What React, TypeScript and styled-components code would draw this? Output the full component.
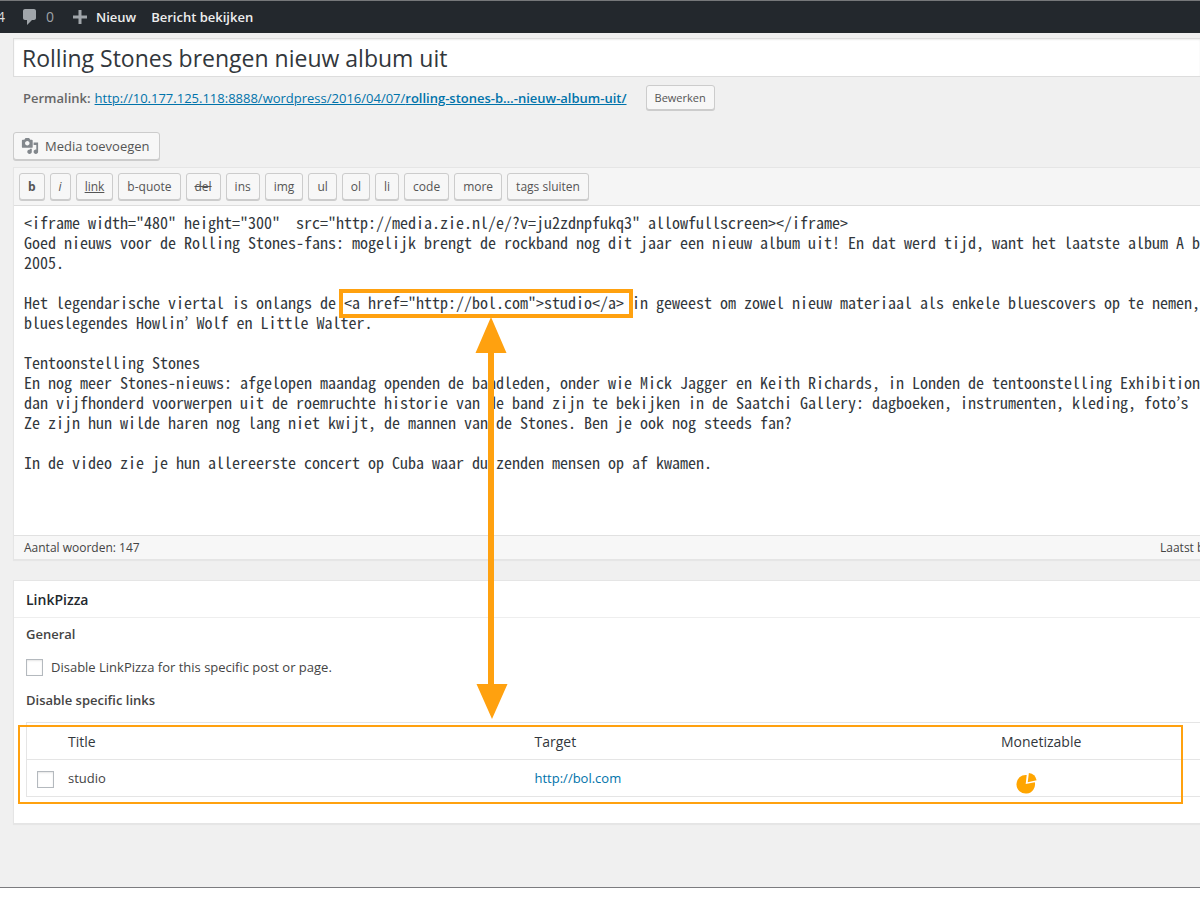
import React from "react";
import styled, { createGlobalStyle } from "styled-components";

const ORANGE = "#ffa10f";

const GlobalStyle = createGlobalStyle`
  *, *::before, *::after { box-sizing: border-box; }
  body {
    margin: 0;
    background: #fff;
    color: #444;
    font-family: "Open Sans", sans-serif;
    font-size: 13px;
    line-height: 20px;
  }
  button, input, textarea { font-family: inherit; margin: 0; }
  h2, h4, p { margin: 0; }
`;

const Page = styled.div`
  overflow: hidden;
  background: #f0f0f0;
  border-top: 1px solid #76787a;
  border-bottom: 1px solid #7c7c7f;
  padding-bottom: 63px;
`;

const AdminBar = styled.nav`
  display: flex;
  align-items: center;
  height: 32px;
  background: #23282d;
`;

const BarLink = styled.a<{ $gap: number; $muted?: boolean }>`
  display: flex;
  align-items: center;
  margin-right: ${(p) => p.$gap}px;
  color: ${(p) => (p.$muted ? "#9ea3a8" : "#eee")};
  font-weight: ${(p) => (p.$muted ? 400 : 600)};
  font-size: ${(p) => (p.$muted ? 14 : 13)}px;
  text-decoration: none;
  white-space: nowrap;
`;

const BarIcon = styled.svg<{ $gap: number }>`
  flex: none;
  margin-right: ${(p) => p.$gap}px;
  fill: #a0a5aa;
`;

const UpdateCount = styled(BarLink)`
  width: 5px;
  justify-content: flex-end;
  color: #ddd;
`;

const Main = styled.main`
  position: relative;
  padding: 5px 0 0 13px;
`;

const TitleInput = styled.input`
  display: block;
  width: 100%;
  height: 39px;
  padding: 0 8px;
  border: 1px solid #ddd;
  border-right: 0;
  background: #fff;
  box-shadow: inset 0 1px 2px rgba(0, 0, 0, 0.07);
  color: #32373c;
  font-size: 23px;
  outline: none;
`;

const Permalink = styled.div`
  display: flex;
  align-items: center;
  height: 41px;
  padding-left: 10px;
  color: #666;
  white-space: nowrap;
  strong { font-weight: 600; }
`;

const TextLink = styled.a<{ $plain?: boolean }>`
  color: #0073aa;
  text-decoration: ${(p) => (p.$plain ? "none" : "underline")};
`;

const PermalinkUrl = styled(TextLink)`
  flex: 0 0 547px;
  margin: 0 4px;
  b { font-weight: 600; }
`;

const Button = styled.button`
  height: 27px;
  padding: 0 8px;
  border: 1px solid #ccc;
  border-radius: 3px;
  background: #f7f7f7;
  box-shadow: 0 1px 0 #ccc;
  color: #555;
  font-size: 12px;
  line-height: 23px;
  white-space: nowrap;
`;

const SmallButton = styled(Button)`
  height: 25px;
  font-size: 11px;
`;

const MediaButton = styled(Button)`
  display: flex;
  align-items: center;
  gap: 6px;
  height: 28px;
  margin: 14px 0 7px;
  padding: 0 9px 0 7px;
  font-size: 13px;
  svg { fill: #82878c; }
`;

const Editor = styled.section`
  border: 1px solid #e5e5e5;
  border-right: 0;
  box-shadow: 0 1px 1px rgba(0, 0, 0, 0.04);
`;

const Toolbar = styled.div`
  display: flex;
  gap: 5px;
  height: 38px;
  padding: 5px;
  border-bottom: 1px solid #ddd;
  background: #f5f5f5;
`;

const TagButton = styled(Button)<{ $look?: "bold" | "italic" | "underline" | "strike" }>`
  font-weight: ${(p) => (p.$look === "bold" ? 700 : 400)};
  font-style: ${(p) => (p.$look === "italic" ? "italic" : "normal")};
  text-decoration: ${(p) =>
    p.$look === "underline" ? "underline" : p.$look === "strike" ? "line-through" : "none"};
`;

const Content = styled.textarea`
  display: block;
  width: 100%;
  height: 329px;
  padding: 6px 0 0 10px;
  border: 0;
  outline: none;
  resize: none;
  overflow: hidden;
  white-space: pre;
  background: #fff;
  color: #32373c;
  font-family: "Noto Sans Mono CJK KR", "DejaVu Sans Mono", monospace;
  font-size: 16px;
  line-height: 20px;
`;

const StatusBar = styled.footer`
  display: flex;
  justify-content: space-between;
  height: 24px;
  padding-left: 10px;
  border-top: 1px solid #e1e1e1;
  background: #f7f7f7;
  font-size: 12px;
  line-height: 23px;
  white-space: nowrap;
`;

const LastEdited = styled.span`
  width: 40px;
`;

const MetaBox = styled.section`
  margin-top: 20px;
  padding-bottom: 26px;
  border: 1px solid #e5e5e5;
  border-right: 0;
  background: #fff;
  box-shadow: 0 1px 1px rgba(0, 0, 0, 0.04);
`;

const BoxTitle = styled.h2`
  height: 37px;
  padding-left: 12px;
  border-bottom: 1px solid #eee;
  color: #23282d;
  font-size: 14px;
  font-weight: 600;
  line-height: 38px;
`;

const BoxBody = styled.div`
  padding: 6px 0 0 12px;
`;

const GroupTitle = styled.h4`
  font-size: 13px;
  font-weight: 600;
  line-height: 20px;
`;

const OptionLabel = styled.label`
  display: flex;
  align-items: center;
  gap: 8px;
  margin: 13px 0;
`;

const CheckBox = styled.input.attrs({ type: "checkbox" })`
  appearance: none;
  flex: none;
  display: block;
  width: 17px;
  height: 17px;
  border: 1px solid #b4b9be;
  background: #fff;
  box-shadow: inset 0 1px 2px rgba(0, 0, 0, 0.1);
`;

const LinksArea = styled.div`
  position: relative;
  margin-top: 12px;
`;

const LinksTable = styled.table`
  width: 100%;
  table-layout: fixed;
  border-collapse: separate;
  border-spacing: 0;
  border: 1px solid #e5e5e5;
  border-right: 0;

  th, td {
    height: 37px;
    padding: 0 0 0 9px;
    text-align: left;
    font-weight: 400;
  }
  th {
    padding-top: 2px;
    border-bottom: 1px solid #e5e5e5;
    color: #32373c;
    font-size: 14px;
  }
  td { height: 36px; }
`;

const CheckColumn = styled.col`
  width: 32px;
`;

const LastColumn = styled.col`
  width: 208px;
`;

const PieIcon = styled.svg`
  display: block;
  margin: 10px 0 0 15px;
  fill: #ffa500;
`;

const RowCheck = styled(CheckBox)`
  margin: 3px 0 0 1px;
`;

const TableFrame = styled.div`
  position: absolute;
  inset: 3px 17px -7px -8px;
  border: 2px solid ${ORANGE};
  pointer-events: none;
`;

const LinkFrame = styled.div`
  position: absolute;
  left: 339px;
  top: 256px;
  width: 294px;
  height: 29px;
  border: 4px solid ${ORANGE};
  pointer-events: none;
`;

const Arrow = styled.svg`
  position: absolute;
  left: 475px;
  top: 284px;
  fill: ${ORANGE};
  pointer-events: none;
`;

const tagButtons: { label: string; look?: "bold" | "italic" | "underline" | "strike" }[] = [
  { label: "b", look: "bold" },
  { label: "i", look: "italic" },
  { label: "link", look: "underline" },
  { label: "b-quote" },
  { label: "del", look: "strike" },
  { label: "ins" },
  { label: "img" },
  { label: "ul" },
  { label: "ol" },
  { label: "li" },
  { label: "code" },
  { label: "more" },
  { label: "tags sluiten" },
];

const postContent = [
  '<iframe width="480" height="300"  src="http://media.zie.nl/e/?v=ju2zdnpfukq3" allowfullscreen></iframe>',
  "Goed nieuws voor de Rolling Stones-fans: mogelijk brengt de rockband nog dit jaar een nieuw album uit! En dat werd tijd, want het laatste album A b",
  "2005.",
  "",
  'Het legendarische viertal is onlangs de <a href="http://bol.com">studio</a> in geweest om zowel nieuw materiaal als enkele bluescovers op te nemen,',
  "blueslegendes Howlin’ Wolf en Little Walter.",
  "",
  "Tentoonstelling Stones",
  "En nog meer Stones-nieuws: afgelopen maandag openden de bandleden, onder wie Mick Jagger en Keith Richards, in Londen de tentoonstelling Exhibition",
  "dan vijfhonderd voorwerpen uit de roemruchte historie van de band zijn te bekijken in de Saatchi Gallery: dagboeken, instrumenten, kleding, foto’s",
  "Ze zijn hun wilde haren nog lang niet kwijt, de mannen van de Stones. Ben je ook nog steeds fan?",
  "",
  "In de video zie je hun allereerste concert op Cuba waar duizenden mensen op af kwamen.",
].join("\n");

export default function App() {
  return (
    <>
      <GlobalStyle />
      <Page>
        <AdminBar>
          <UpdateCount href="#" $gap={15} $muted>4</UpdateCount>
          <BarLink href="#" $gap={16} $muted>
            <BarIcon width="20" height="20" viewBox="0 0 20 20" $gap={6}>
              <path d="M5 2h9c1.1 0 2 .9 2 2v7c0 1.1-.9 2-2 2h-2l-5 5v-5H5c-1.1 0-2-.9-2-2V4c0-1.1.9-2 2-2z" />
            </BarIcon>
            0
          </BarLink>
          <BarLink href="#" $gap={15}>
            <BarIcon width="20" height="20" viewBox="0 0 20 20" $gap={6}>
              <path d="M8.5 3h3v5.5H17v3h-5.500V17h-3v-5.500H3v-3h5.500z" />
            </BarIcon>
            Nieuw
          </BarLink>
          <BarLink href="#" $gap={0}>Bericht bekijken</BarLink>
        </AdminBar>

        <Main>
          <TitleInput aria-label="Titel" defaultValue="Rolling Stones brengen nieuw album uit" />
          <Permalink>
            <strong>Permalink:</strong>
            <PermalinkUrl href="#">
              http://10.177.125.118:8888/wordpress/2016/04/07/<b>rolling-stones-b…-nieuw-album-uit/</b>
            </PermalinkUrl>
            <SmallButton type="button">Bewerken</SmallButton>
          </Permalink>

          <MediaButton type="button">
            <svg width="18" height="18" viewBox="0 0 20 20">
              <path d="M13 11V4c0-.55-.45-1-1-1h-1.670L9 1H5L3.670 3H2c-.55 0-1 .45-1 1v7c0 .55.45 1 1 1h10c.55 0 1-.45 1-1zM7 4.500c1.380 0 2.500 1.120 2.500 2.500S8.380 9.500 7 9.500 4.500 8.380 4.500 7 5.620 4.500 7 4.500zM14 6h5v10.500c0 1.380-1.120 2.500-2.500 2.500S14 17.880 14 16.500s1.120-2.500 2.500-2.500c.17 0 .34.02.5.05V9h-3V6zm-4 8.050V13h2v3.500c0 1.380-1.120 2.500-2.500 2.500S7 17.880 7 16.500 8.120 14 9.500 14c.17 0 .34.02.5.05z" />
            </svg>
            Media toevoegen
          </MediaButton>

          <Editor>
            <Toolbar>
              {tagButtons.map((b) => (
                <TagButton key={b.label} type="button" $look={b.look}>{b.label}</TagButton>
              ))}
            </Toolbar>
            <Content aria-label="Bericht" wrap="off" spellCheck={false} defaultValue={postContent} />
            <StatusBar>
              <span>Aantal woorden: 147</span>
              <LastEdited>Laatst b</LastEdited>
            </StatusBar>
          </Editor>

          <MetaBox>
            <BoxTitle>LinkPizza</BoxTitle>
            <BoxBody>
              <GroupTitle>General</GroupTitle>
              <OptionLabel>
                <CheckBox />
                Disable LinkPizza for this specific post or page.
              </OptionLabel>
              <GroupTitle>Disable specific links</GroupTitle>
              <LinksArea>
                <LinksTable>
                  <colgroup>
                    <CheckColumn />
                    <col />
                    <col />
                    <LastColumn />
                  </colgroup>
                  <thead>
                    <tr>
                      <th />
                      <th>Title</th>
                      <th>Target</th>
                      <th>Monetizable</th>
                    </tr>
                  </thead>
                  <tbody>
                    <tr>
                      <td><RowCheck aria-label="studio" /></td>
                      <td>studio</td>
                      <td><TextLink href="#" $plain>http://bol.com</TextLink></td>
                      <td>
                        <PieIcon width="21" height="21" viewBox="0 0 21 21">
                          <path d="M10.700 2A9.300 9.300 0 1 0 18.800 9.200L9.700 11z" />
                          <path d="M12.900 0A9 9 0 0 1 20.600 7.200L11.700 9.200z" />
                        </PieIcon>
                      </td>
                    </tr>
                  </tbody>
                </LinksTable>
                <TableFrame />
              </LinksArea>
            </BoxBody>
          </MetaBox>

          <LinkFrame />
          <Arrow width="34" height="402" viewBox="0 0 34 402">
            <path d="M16 0L31.500 36H19V367H32.500L17 402L1.500 367H13V36H0.500z" />
          </Arrow>
        </Main>
      </Page>
    </>
  );
}
